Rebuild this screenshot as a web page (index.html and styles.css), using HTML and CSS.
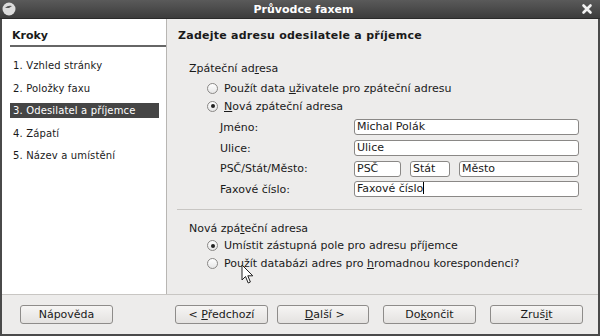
FILE: index.html
```html
<!DOCTYPE html>
<html lang="cs">
<head>
  <meta charset="UTF-8">
  <title>Průvodce faxem</title>
  <link rel="stylesheet" href="styles.css">
</head>
<body>
  <div class="window">
    <div class="titlebar">
      <span class="app-icon">
        <svg width="14" height="14" viewBox="0 0 14 14">
          <circle cx="7" cy="7" r="6.5" fill="#dcdcdc"/>
          <path d="M3 6 Q6 3 10 4 L7 6 Q5 6 3 6 Z" fill="#555"/>
        </svg>
      </span>
      <span class="title">Průvodce faxem</span>
      <span class="close">
        <svg width="12" height="12" viewBox="0 0 12 12">
          <path d="M2.5 2.5 L9.5 9.5 M9.5 2.5 L2.5 9.5" stroke="#f2f2f2" stroke-width="2.6" stroke-linecap="round"/>
        </svg>
      </span>
    </div>

    <div class="content">
      <div class="steps">
        <div class="steps-head">Kroky</div>
        <div class="step">1. Vzhled stránky</div>
        <div class="step">2. Položky faxu</div>
        <div class="step active">3. Odesilatel a příjemce</div>
        <div class="step">4. Zápatí</div>
        <div class="step">5. Název a umístění</div>
      </div>

      <div class="page">
        <div class="page-head">Zadejte adresu odesilatele a příjemce</div>

        <div class="group first">
          <div class="group-label">Zpáteční ad<u>r</u>esa</div>
          <div class="radio"><span class="dot"></span><span>Použít data <u>u</u>živatele pro zpáteční adresu</span></div>
          <div class="radio"><span class="dot on"></span><span><u>N</u>ová zpáteční adresa</span></div>
          <div class="fields">
            <div class="field">
              <label>Jméno:</label>
              <div class="input">Michal Polák</div>
            </div>
            <div class="field">
              <label>Ulice:</label>
              <div class="input">Ulice</div>
            </div>
            <div class="field">
              <label>PSČ/Stát/Město:</label>
              <div class="input-row">
                <div class="input psc">PSČ</div>
                <div class="input stat">Stát</div>
                <div class="input mesto">Město</div>
              </div>
            </div>
            <div class="field">
              <label>Faxové číslo:</label>
              <div class="input">Faxové číslo<span class="caret"></span></div>
            </div>
          </div>
        </div>

        <div class="divider"></div>

        <div class="group second">
          <div class="group-label">Nová zpá<u>t</u>eční adresa</div>
          <div class="radio"><span class="dot on"></span><span>Umístit zástupná pole pro adresu příjemce</span></div>
          <div class="radio"><span class="dot"></span><span>Použít databázi adres pro <u>h</u>romadnou korespondenci?</span></div>
        </div>
      </div>
    </div>

    <div class="footer">
      <button class="btn">Nápověda</button>
      <div class="nav">
        <button class="btn">&lt; <u>P</u>ředchozí</button>
        <button class="btn next">&nbsp;<u>D</u>alší &gt;</button>
        <button class="btn">Do<u>k</u>ončit</button>
        <button class="btn">Zruš<u>i</u>t</button>
      </div>
    </div>

    <svg class="cursor" width="14" height="22" viewBox="0 0 14 22">
      <path d="M1 1 L1 16 L4.5 12.5 L7.2 19 L9.4 18 L6.8 11.8 L11.8 11.8 Z" fill="#fff" stroke="#222" stroke-width="1"/>
    </svg>
  </div>
</body>
</html>
```

FILE: styles.css
```css
body {
  margin: 0;
  font-family: "DejaVu Sans", sans-serif;
  font-size: 11px;
  color: #1a1a1a;
  background: #3a3a3a;
}

.window {
  position: relative;
  width: 600px;
  height: 336px;
  display: flex;
  flex-direction: column;
  background: #edeceb;
  box-sizing: border-box;
  border: 2px solid #4a4a4a;
  border-top: none;
}

.titlebar {
  height: 18px;
  margin: 0 -2px;
  display: flex;
  align-items: center;
  background: linear-gradient(#5a5a5a, #3c3c3c);
  border-bottom: 1px solid #2a2a2a;
  color: #fff;
  font-weight: bold;
  font-size: 11px;
  padding: 0 5px 0 2px;
}

.app-icon {
  display: flex;
}

.title {
  flex: 1;
  text-align: center;
  padding-left: 10px;
}

.close {
  display: flex;
  margin-right: 2px;
}

.content {
  flex: 1;
  display: flex;
  border-bottom: 1px solid #c8c6c3;
}

.steps {
  width: 165px;
  background: #fff;
  border-right: 1px solid #b8b6b3;
  padding: 8px 0 0 8px;
  box-sizing: border-box;
}

.steps-head {
  font-weight: bold;
  padding: 2px 2px 3px 2px;
  border-bottom: 2px solid #666;
  margin-bottom: 11px;
}

.step {
  height: 15px;
  line-height: 15px;
  padding-left: 3px;
  margin: 0 7px 7.6px 0;
  font-size: 10px;
  letter-spacing: 0.15px;
}

.step.active {
  background: #454545;
  color: #fff;
}

.page {
  flex: 1;
  padding: 10px 16px 0 11px;
}

.page-head {
  font-weight: bold;
  font-size: 11px;
  letter-spacing: 0.25px;
  margin-bottom: 17px;
}

.group {
  padding-left: 11px;
}

.first {
  padding-top: 3px;
}

.group-label {
  margin-bottom: 4px;
}

.radio {
  display: flex;
  align-items: center;
  height: 18px;
  padding-left: 18px;
}

.dot {
  flex: 0 0 auto;
  width: 9px;
  height: 9px;
  border: 1px solid #8a8886;
  border-radius: 50%;
  background: linear-gradient(#fff, #e6e6e6);
  margin-right: 6px;
  position: relative;
}

.dot.on::after {
  content: "";
  position: absolute;
  left: 2.5px;
  top: 2.5px;
  width: 4px;
  height: 4px;
  border-radius: 50%;
  background: #222;
}

.fields {
  padding: 0 3px 0 31px;
  margin-top: 2px;
}

.field {
  display: flex;
  align-items: center;
  height: 20.7px;
}

.field label {
  flex: 0 0 134px;
}

.input {
  flex: 1;
  height: 14px;
  line-height: 14px;
  border: 1px solid #8a8886;
  border-radius: 3px;
  background: #fff;
  padding-left: 2px;
}

.caret {
  display: inline-block;
  width: 1px;
  height: 12px;
  background: #000;
  vertical-align: -2px;
}

.input-row {
  flex: 1;
  display: flex;
  gap: 9px;
}

.psc {
  flex: 0 0 43px;
}

.stat {
  flex: 0 0 36px;
}

.divider {
  height: 1px;
  background: #c8c6c3;
  margin: 9px 0 0 -1px;
}

.second {
  padding-top: 12px;
}

.second .group-label {
  margin-bottom: 2px;
}

.footer {
  height: 39px;
  display: flex;
  align-items: center;
  padding: 0 15px 0 18px;
  justify-content: space-between;
}

.nav {
  display: flex;
  gap: 14px;
}

.btn {
  width: 93px;
  height: 19px;
  font-family: "DejaVu Sans", sans-serif;
  font-size: 11px;
  color: #1a1a1a;
  background: linear-gradient(#f6f5f4, #e4e2e0);
  border: 1px solid #8e8c8a;
  border-radius: 3px;
  padding: 0;
}

.btn.next {
  width: 92px;
  margin-left: -5px;
}

.cursor {
  position: absolute;
  left: 239px;
  top: 264px;
}
```
